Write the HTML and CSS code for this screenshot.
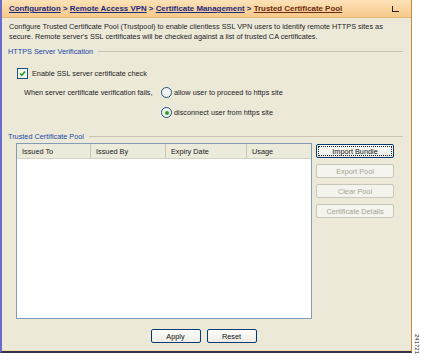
FILE: index.html
```html
<!DOCTYPE html>
<html lang="en">
<head>
    <meta charset="UTF-8">
    <title>Trusted Certificate Pool</title>
    <link rel="stylesheet" href="styles.css">
</head>
<body>
    <div class="page">
        <div class="frame">
            <!-- Breadcrumb -->
            <div class="crumbs">
                <span><a>Configuration</a> &gt; <a>Remote Access VPN</a> &gt; <a>Certificate Management</a> &gt; <a class="current">Trusted Certificate Pool</a></span>
                <span class="corner"></span>
            </div>

            <div class="content">
                <p class="desc">Configure Trusted Certificate Pool (Trustpool) to enable clientless SSL VPN users to identify remote HTTPS sites as secure. Remote server's SSL certificates will be checked against a list of trusted CA certificates.</p>

                <!-- HTTPS -->
                <div class="group-title"><span>HTTPS Server Verification</span></div>
                <div class="check-row">
                    <span class="checkbox"><svg width="9" height="9" viewBox="0 0 9 9"><path d="M2 4.5 L3.8 6.3 L7 2.6" fill="none" stroke="#21a121" stroke-width="1.6"/></svg></span>
                    <span>Enable SSL server certificate check</span>
                </div>
                <div class="fail-row">
                    <span class="fail-label">When server certificate verification fails,</span>
                    <div class="radios">
                        <div class="radio-row"><span class="radio"></span><span>allow user to proceed to https site</span></div>
                        <div class="radio-row"><span class="radio on"></span><span>disconnect user from https site</span></div>
                    </div>
                </div>

                <!-- Pool -->
                <div class="group-title pool-title"><span>Trusted Certificate Pool</span></div>
                <div class="pool">
                    <div class="table">
                        <div class="thead">
                            <span class="th">Issued To</span>
                            <span class="th">Issued By</span>
                            <span class="th">Expiry Date</span>
                            <span class="th last">Usage</span>
                        </div>
                    </div>
                    <div class="side">
                        <button class="btn focus">Import Bundle</button>
                        <button class="btn" disabled>Export Pool</button>
                        <button class="btn" disabled>Clear Pool</button>
                        <button class="btn" disabled>Certificate Details</button>
                    </div>
                </div>

                <div class="actions">
                    <button class="btn act">Apply</button>
                    <button class="btn act">Reset</button>
                </div>
            </div>
        </div>
        <span class="fig">241721</span>
    </div>
</body>
</html>
```

FILE: styles.css
```css
/* Grundlayout */
body {
    margin: 0;
    background: #fff;
    font-family: 'Liberation Sans', Arial, sans-serif;
    font-size: 7.3px;
    color: #1c1c1c;
}

.page {
    position: relative;
    width: 433px;
    height: 360px;
}

.frame {
    width: 409px;
    height: 351px;
    background: #ece9d8;
    border-left: 2px solid #6c6ccf;
    border-right: 1px solid #c98a40;
    border-bottom: 2px solid #34344e;
    box-shadow: inset 0 -1px 0 #f7d9a8;
    display: flex;
    flex-direction: column;
}

/* Breadcrumb */
.crumbs {
    height: 17px;
    background: linear-gradient(#fde2b8, #f7c98a);
    border-bottom: 1px solid #e7b778;
    display: flex;
    align-items: center;
    justify-content: space-between;
    padding: 0 12px 0 7px;
    font-weight: bold;
    font-size: 7.9px;
    color: #1a2a80;
}

.crumbs a {
    text-decoration: underline;
    color: #1a2a80;
}

.crumbs .current {
    color: #6a2a10;
}

.corner {
    width: 6px;
    height: 5px;
    border-left: 1px solid #222;
    border-bottom: 1px solid #222;
}

.content {
    flex: 1;
    display: flex;
    flex-direction: column;
    padding: 0 8px 0 6px;
}

.desc {
    margin: 4px 0 0 1px;
    line-height: 10px;
    width: 392px;
}

/* Gruppen */
.group-title {
    display: flex;
    align-items: center;
    gap: 5px;
    margin-top: 5px;
    color: #2048a8;
}

.group-title::after {
    content: "";
    flex: 1;
    height: 1px;
    background: #c8c5b2;
}

.check-row {
    display: flex;
    align-items: center;
    gap: 4px;
    margin: 12px 0 0 9px;
}

.checkbox {
    width: 9px;
    height: 9px;
    border: 1px solid #1c5180;
    background: #f4f4ee;
    display: flex;
}

.fail-row {
    display: flex;
    margin: 8px 0 0 16px;
}

.fail-label {
    width: 137px;
    line-height: 11px;
}

.radios {
    display: flex;
    flex-direction: column;
    gap: 9px;
}

.radio-row {
    display: flex;
    align-items: center;
    gap: 2px;
    height: 11px;
}

.radio {
    width: 9px;
    height: 9px;
    border: 1px solid #1c5180;
    border-radius: 50%;
    background: #f4f4ee;
    position: relative;
}

.radio.on::after {
    content: "";
    position: absolute;
    left: 2.5px;
    top: 2.5px;
    width: 4px;
    height: 4px;
    border-radius: 50%;
    background: #2aa12a;
}

.pool-title {
    margin-top: 14px;
}

/* Tabelle */
.pool {
    display: flex;
    gap: 4px;
    margin: 2px 0 0 8px;
}

.table {
    width: 294px;
    height: 174px;
    background: #fff;
    border: 1px solid #7f9db9;
}

.thead {
    display: grid;
    grid-template-columns: 74px 75px 81px 1fr;
    height: 14px;
    background: #ebeadb;
    border-bottom: 1px solid #d6d2c2;
}

.th {
    display: flex;
    align-items: center;
    padding-left: 5px;
    border-right: 1px solid #c7c5b2;
    color: #222;
}

.th.last {
    border-right: none;
}

.side {
    display: flex;
    flex-direction: column;
    gap: 6px;
    padding-top: 1px;
}

.btn {
    font-family: 'Liberation Sans', Arial, sans-serif;
    font-size: 7.3px;
    width: 78px;
    height: 14px;
    padding: 0;
    border: 1px solid #003c74;
    border-radius: 2px;
    background: linear-gradient(#fefefd, #ecebe4);
    color: #111;
}

.btn:disabled {
    border-color: #c9c7ba;
    background: #f4f3ee;
    color: #a7a495;
}

.btn.focus {
    outline: 1px dotted #222;
    outline-offset: -3px;
}

.actions {
    display: flex;
    justify-content: center;
    gap: 6px;
    margin-top: 10px;
    padding-right: 4px;
}

.btn.act {
    width: 50px;
}

/* Figurnummer */
.fig {
    position: absolute;
    left: 420px;
    top: 334px;
    font-size: 6px;
    transform: rotate(90deg);
    transform-origin: left top;
    color: #222;
}
```
